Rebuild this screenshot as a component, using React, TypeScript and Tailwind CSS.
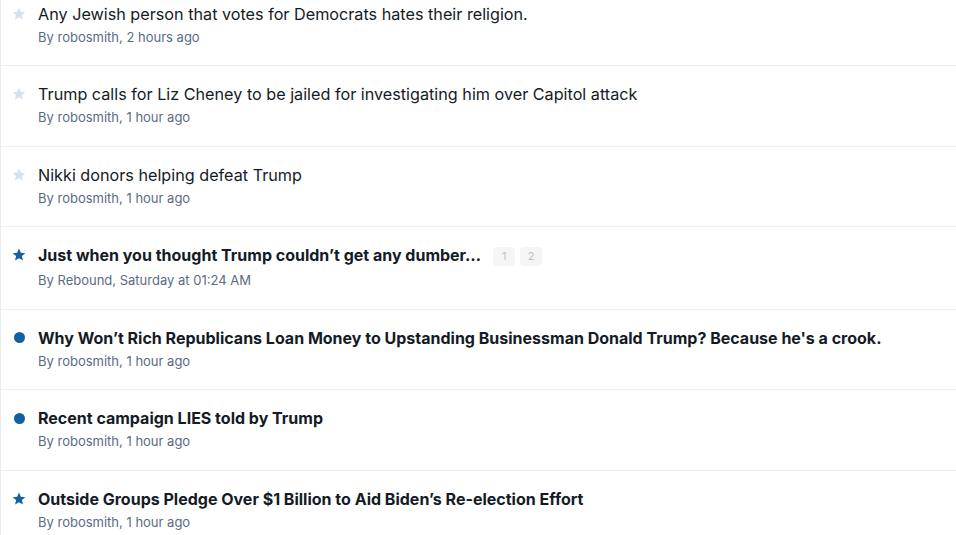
import React from "react";

type Row = {
  title: string;
  meta: string;
  icon: "faded" | "star" | "dot";
  bold: boolean;
  pages?: string[];
};

const rows: Row[] = [
  { title: "Any Jewish person that votes for Democrats hates their religion.", meta: "By robosmith, 2 hours ago", icon: "faded", bold: false },
  { title: "Trump calls for Liz Cheney to be jailed for investigating him over Capitol attack", meta: "By robosmith, 1 hour ago", icon: "faded", bold: false },
  { title: "Nikki donors helping defeat Trump", meta: "By robosmith, 1 hour ago", icon: "faded", bold: false },
  { title: "Just when you thought Trump couldn\u2019t get any dumber\u2026", meta: "By Rebound, Saturday at 01:24 AM", icon: "star", bold: true, pages: ["1", "2"] },
  { title: "Why Won\u2019t Rich Republicans Loan Money to Upstanding Businessman Donald Trump? Because he's a crook.", meta: "By robosmith, 1 hour ago", icon: "dot", bold: true },
  { title: "Recent campaign LIES told by Trump", meta: "By robosmith, 1 hour ago", icon: "dot", bold: true },
  { title: "Outside Groups Pledge Over $1 Billion to Aid Biden\u2019s Re-election Effort", meta: "By robosmith, 1 hour ago", icon: "star", bold: true },
];

function Star({ color }: { color: string }) {
  return (
    <svg width="14" height="14" viewBox="0 0 24 24" aria-hidden>
      <path
        fill={color}
        d="M12 1l3.2 7.1 7.6.7-5.8 5.1 1.8 7.6L12 17.6l-6.8 3.9 1.8-7.6-5.8-5.1 7.6-.7z"
      />
    </svg>
  );
}

function Icon({ kind }: { kind: Row["icon"] }) {
  if (kind === "dot") return <span className="block w-[11px] h-[11px] rounded-full bg-[#12609f]" />;
  if (kind === "star") return <Star color="#17609f" />;
  return <Star color="#d3e2ee" />;
}

export default function App() {
  return (
    <div
      className="w-[956px] h-[535px] overflow-hidden bg-white"
      style={{ fontFamily: "Inter, 'Noto Sans', sans-serif" }}
    >
      <div className="-mt-[14.5px] border-l border-[#e9ecef]">
        {rows.map((r, i) => (
          <div key={i} className="flex border-b border-[#eceef0] pt-[17px] pb-[19.5px]">
            <div className="w-[37px] shrink-0 flex justify-center pr-[1px] h-[22px] items-center">
              <Icon kind={r.icon} />
            </div>
            <div className="flex flex-col">
              <div className="flex items-center h-[22px]">
                <span
                  className={`leading-[22px] text-[#141b26] whitespace-nowrap ${
                    r.bold ? "font-bold text-[16px]" : "font-normal text-[16.2px]"
                  }`}
                >
                  {r.title}
                </span>
                {r.pages && (
                  <div className="flex gap-[5px] ml-[12px] mt-[3px]">
                    {r.pages.map((p) => (
                      <span
                        key={p}
                        className="w-[22px] h-[19px] rounded-[4px] bg-[#f5f5f5] text-[#c2c2c2] text-[11px] flex items-center justify-center"
                      >
                        {p}
                      </span>
                    ))}
                  </div>
                )}
              </div>
              <div className={`${r.pages ? "mt-[5px]" : "mt-[3px]"} text-[13px] leading-[18px] text-[#5b6b84]`}>
                {r.meta}
              </div>
            </div>
          </div>
        ))}
      </div>
    </div>
  );
}
